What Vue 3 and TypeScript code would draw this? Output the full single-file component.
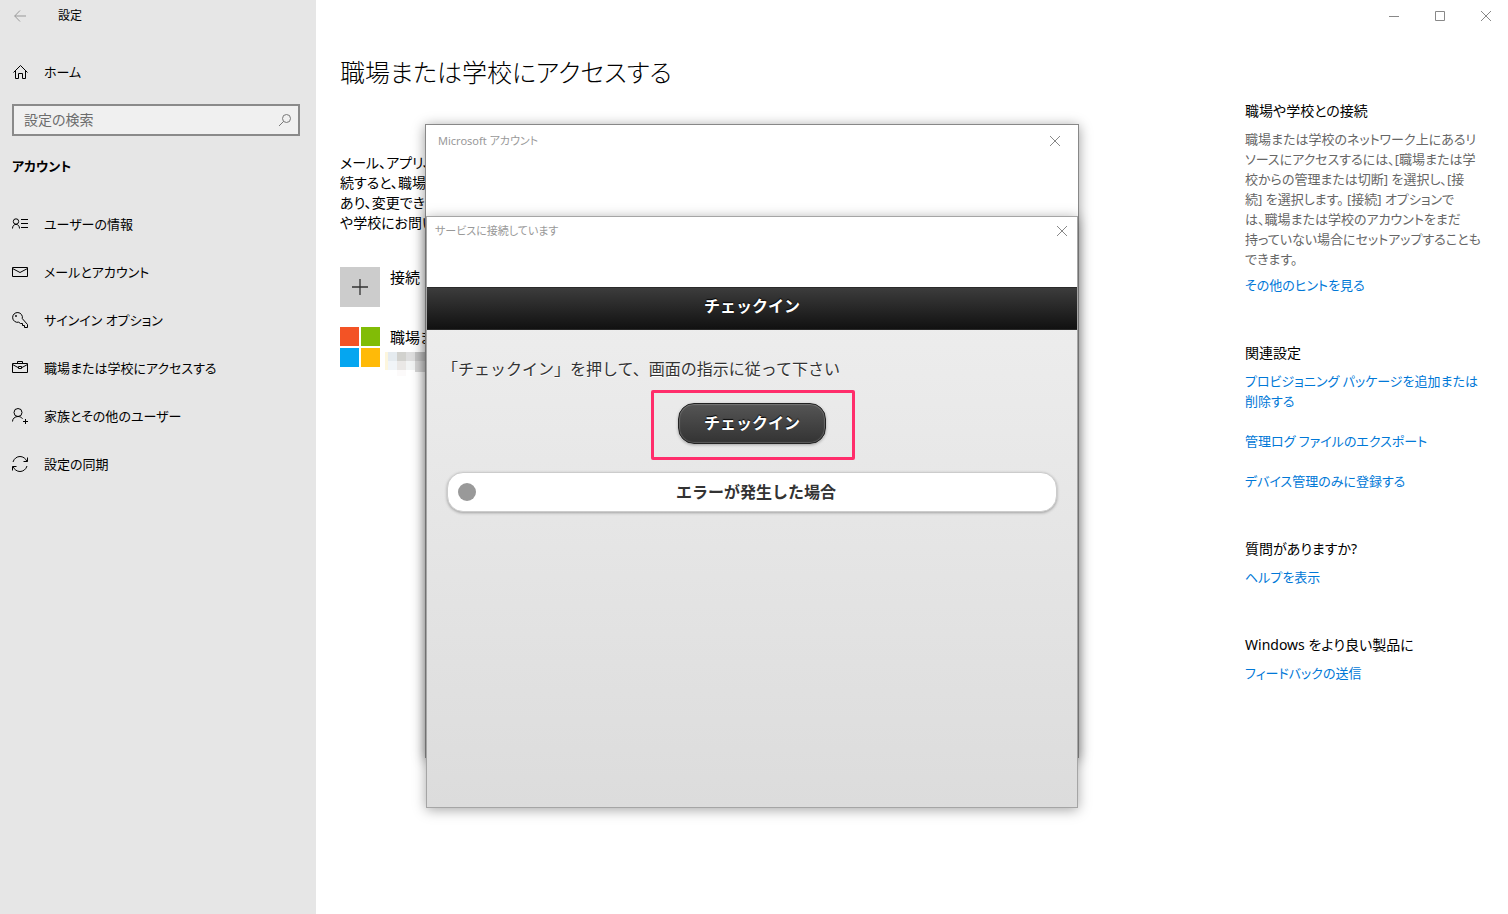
<script setup lang="ts">
interface NavItem {
  icon: string
  label: string
}

interface LinkSection {
  title: string
  links: string[][]
}

const navItems: NavItem[] = [
  { icon: 'info', label: 'ユーザーの情報' },
  { icon: 'mail', label: 'メールとアカウント' },
  { icon: 'key', label: 'サインイン オプション' },
  { icon: 'work', label: '職場または学校にアクセスする' },
  { icon: 'family', label: '家族とその他のユーザー' },
  { icon: 'sync', label: '設定の同期' },
]

const introLines: string[] = ['メール、アプリ、', '続すると、職場', 'あり、変更でき', 'や学校にお問い']

const hintLines: string[] = [
  '職場または学校のネットワーク上にあるリ',
  'ソースにアクセスするには、[職場または学',
  '校からの管理または切断] を選択し、[接',
  '続] を選択します。 [接続] オプションで',
  'は、職場または学校のアカウントをまだ',
  '持っていない場合にセットアップすることも',
  'できます。',
]

const sections: LinkSection[] = [
  {
    title: '関連設定',
    links: [
      ['プロビジョニング パッケージを追加または', '削除する'],
      ['管理ログ ファイルのエクスポート'],
      ['デバイス管理のみに登録する'],
    ],
  },
  { title: '質問がありますか?', links: [['ヘルプを表示']] },
  { title: 'Windows をより良い製品に', links: [['フィードバックの送信']] },
]
</script>

<template>
  <div class="window">
    <aside class="sidebar">
      <header class="sidebar-title">
        <button class="back" type="button" aria-label="戻る">
          <svg width="12" height="12" viewBox="0 0 12 12"><path d="M6 .5.7 6 6 11.500M.7 6H12" /></svg>
        </button>
        <span>設定</span>
      </header>

      <a class="nav-link home" href="#">
        <svg width="16" height="16" viewBox="0 0 16 16">
          <path d="M1.500 8.500 8.500 1.500 15.500 8.500M3.500 6.500V14.500H6.500V9.500H10.500V14.500H13.500V6.500" />
        </svg>
        <span>ホーム</span>
      </a>

      <div class="search">
        <input type="text" placeholder="設定の検索" aria-label="設定の検索" />
        <svg width="14" height="14" viewBox="0 0 14 14"><circle cx="8.500" cy="5.500" r="4" /><path d="M5.600 8.400 1 13" /></svg>
      </div>

      <h2>アカウント</h2>

      <nav>
        <a v-for="item in navItems" :key="item.icon" class="nav-link" href="#">
          <svg width="16" height="16" viewBox="0 0 16 16">
            <template v-if="item.icon === 'info'">
              <circle cx="4" cy="5.500" r="2.700" />
              <path d="M.5 12.500C.5 10 2 8.400 4 8.400S7.500 10 7.500 12.500M9 3.500H16M9 7.500H16M9 11.500H16" />
            </template>
            <path v-else-if="item.icon === 'mail'" d="M.5 3.500H15.500V12.500H.5ZM.5 4.500 8 8.500 15.500 4.500" />
            <template v-else-if="item.icon === 'key'">
              <path d="M10.300 6.600A4.900 4.900 0 1 0 6.700 10.200L8.500 11.500H10.500V13.500H12.500V15.500H15.500V12.500Z" />
              <circle cx="4" cy="4" r=".6" />
            </template>
            <path
              v-else-if="item.icon === 'work'"
              d="M.5 3.500H15.500V12.500H.5ZM5.500 3.500V1.500H10.500V3.500M.5 4.500 6 7.500M10 7.500 15.500 4.500M6.500 6.500H9.500V8.500H6.500Z"
            />
            <template v-else-if="item.icon === 'family'">
              <circle cx="6" cy="4.500" r="4" />
              <path d="M.5 13.500C.5 10.500 3 8.500 6 8.500 7.800 8.500 9.500 9.300 10.500 10.700M13.500 11V16M11 13.500H16" />
            </template>
            <path
              v-else
              d="M1 6C2 2.500 5 .5 8 .5 11 .5 13.800 2.500 15 5.500M15.500 1.500V5.500H11.500M15 10C14 13.500 11 15.500 8 15.500 5 15.500 2.200 13.500 1 10.500M.5 14.500V10.500H4.500"
            />
          </svg>
          <span>{{ item.label }}</span>
        </a>
      </nav>
    </aside>

    <main class="main">
      <div class="caption">
        <button type="button" aria-label="最小化">
          <svg width="46" height="32" viewBox="0 0 46 32"><path d="M19 16.500H29" /></svg>
        </button>
        <button type="button" aria-label="最大化">
          <svg width="46" height="32" viewBox="0 0 46 32"><path d="M19.500 11.500H28.500V20.500H19.500Z" /></svg>
        </button>
        <button type="button" aria-label="閉じる">
          <svg width="46" height="32" viewBox="0 0 46 32"><path d="M19 11 29 21M29 11 19 21" /></svg>
        </button>
      </div>

      <div class="columns">
        <section class="content">
          <h1>職場または学校にアクセスする</h1>
          <p class="intro">
            <span v-for="line in introLines" :key="line">{{ line }}</span>
          </p>
          <button class="account" type="button">
            <svg class="tile" width="40" height="40" viewBox="0 0 40 40">
              <rect width="40" height="40" fill="#ccc" />
              <path d="M12 20H28M20 12V28" stroke="#333" stroke-width="1.300" />
            </svg>
            <span>接続</span>
          </button>
          <button class="account" type="button">
            <svg class="tile" width="40" height="40" viewBox="0 0 40 40">
              <rect width="19" height="19" fill="#f35325" />
              <rect x="21" width="19" height="19" fill="#81bc06" />
              <rect y="21" width="19" height="19" fill="#05a6f0" />
              <rect x="21" y="21" width="19" height="19" fill="#ffba08" />
            </svg>
            <span class="account-text">
              <span>職場ま</span>
              <svg class="mosaic" width="40" height="24" viewBox="0 0 40 24">
                <rect width="3" height="18" fill="#fdf6dd" />
                <rect x="3" width="9" height="9" fill="#e5ebef" />
                <rect x="12" width="9" height="9" fill="#d2d2ce" />
                <rect x="21" width="9" height="9" fill="#dedede" />
                <rect x="30" width="10" height="9" fill="#c4c4c4" />
                <rect x="3" y="9" width="9" height="9" fill="#f1f5f8" />
                <rect x="12" y="9" width="9" height="9" fill="#eae8e6" />
                <rect x="21" y="9" width="9" height="9" fill="#f2f4f4" />
                <rect x="30" y="9" width="10" height="11" fill="#d6d6d6" />
                <rect x="12" y="18" width="9" height="6" fill="#fcfafa" />
              </svg>
            </span>
          </button>
        </section>

        <aside class="related">
          <section>
            <h3>職場や学校との接続</h3>
            <p><span v-for="line in hintLines" :key="line">{{ line }}</span></p>
            <a class="more" href="#">その他のヒントを見る</a>
          </section>
          <section v-for="section in sections" :key="section.title">
            <h3>{{ section.title }}</h3>
            <div class="links">
              <a v-for="link in section.links" :key="link[0]" href="#">
                <span v-for="part in link" :key="part">{{ part }}</span>
              </a>
            </div>
          </section>
        </aside>
      </div>
    </main>

    <div class="account-dialog" role="dialog" aria-label="Microsoft アカウント">
      <header class="dialog-title">
        <span>Microsoft アカウント</span>
        <button type="button" aria-label="閉じる">
          <svg width="46" height="32" viewBox="0 0 46 32"><path d="M18 11 28 21M28 11 18 21" /></svg>
        </button>
      </header>

      <div class="service-dialog" role="dialog" aria-label="サービスに接続しています">
        <header class="dialog-title service-title">
          <span>サービスに接続しています</span>
          <button type="button" aria-label="閉じる">
            <svg width="30" height="28" viewBox="0 0 30 28"><path d="M10 9 20 19M20 9 10 19" /></svg>
          </button>
        </header>
        <div class="page">
          <h2 class="page-header">チェックイン</h2>
          <div class="page-body">
            <p>「チェックイン」を押して、画面の指示に従って下さい</p>
            <div class="highlight">
              <button class="checkin" type="button">チェックイン</button>
            </div>
            <button class="trouble" type="button">
              <span class="dot"></span>
              <span class="trouble-label">エラーが発生した場合</span>
            </button>
          </div>
        </div>
      </div>
    </div>
  </div>
</template>

<style>
body {
  margin: 0;
}
</style>

<style scoped>
* {
  box-sizing: border-box;
}

.window {
  position: relative;
  display: flex;
  min-height: 100vh;
  overflow: hidden;
  background: #fff;
  color: #000;
  font-family: "Noto Sans", "Noto Sans CJK JP", sans-serif;
  font-feature-settings: "palt";
  font-size: 13px;
  line-height: 20px;
}

h1,
h2,
h3,
p {
  margin: 0;
  font-weight: 400;
}

button {
  margin: 0;
  padding: 0;
  border: 0;
  background: none;
  color: inherit;
  font: inherit;
  font-feature-settings: inherit;
}

a {
  color: #0078d7;
  text-decoration: none;
}

svg {
  display: block;
  flex: none;
  fill: none;
  stroke: #000;
}

.sidebar {
  flex: none;
  width: 316px;
  background: #e6e6e6;
}

.sidebar-title {
  display: flex;
  align-items: center;
  gap: 32px;
  height: 32px;
  padding-left: 14px;
  font-size: 12px;
}

.back svg {
  stroke: #999;
}

.nav-link {
  display: flex;
  align-items: center;
  gap: 16px;
  height: 48px;
  padding-left: 12px;
  color: #000;
}

.home {
  height: 40px;
  margin: 20px 0 12px;
}

.search {
  display: flex;
  align-items: center;
  height: 32px;
  margin: 0 16px 0 12px;
  padding: 0 6px 0 10px;
  border: 2px solid #8a8a8a;
  background: #f0f0f0;
}

.search input {
  flex: 1;
  min-width: 0;
  padding: 0;
  border: 0;
  outline: 0;
  background: none;
  font: inherit;
  font-feature-settings: inherit;
  font-size: 14px;
}

.search input::placeholder {
  color: #6c6c6c;
  opacity: 1;
}

.search svg {
  stroke: #777;
}

.sidebar h2 {
  margin: 20px 12px 24px;
  font-size: 13px;
  font-weight: 700;
}

.main {
  flex: 1;
  min-width: 0;
}

.caption {
  display: flex;
  justify-content: flex-end;
  height: 32px;
}

.caption svg,
.dialog-title svg {
  stroke: #888;
}

.columns {
  display: flex;
  justify-content: space-between;
  padding: 0 24px;
}

h1 {
  margin-top: 20px;
  font-size: 25px;
  font-weight: 300;
  line-height: 40px;
  white-space: nowrap;
}

.intro {
  margin: 61px 0 34px;
  font-size: 14px;
}

.intro span,
.related p span,
.links span {
  display: block;
  white-space: nowrap;
}

.account {
  display: flex;
  gap: 10px;
  height: 60px;
  font-size: 15px;
  text-align: left;
}

.account-text {
  display: flex;
  flex-direction: column;
  gap: 5px;
}

.tile,
.mosaic {
  stroke: none;
}

.mosaic {
  margin-left: -5px;
}

.related {
  display: flex;
  flex-direction: column;
  flex: none;
  gap: 48px;
  width: 239px;
  padding-top: 69px;
}

.related h3 {
  margin-bottom: 8px;
  font-size: 14px;
}

.related p {
  margin-bottom: 6px;
  color: #666;
}

.more {
  display: block;
}

.links {
  display: flex;
  flex-direction: column;
  gap: 20px;
}

.account-dialog {
  position: absolute;
  top: 124px;
  left: calc(50% - 329px);
  width: 654px;
  height: 634px;
  border: 1px solid #888;
  background: #fff;
  box-shadow: 0 2px 12px rgba(0, 0, 0, 0.4);
}

.dialog-title {
  display: flex;
  align-items: center;
  justify-content: space-between;
  height: 32px;
  padding-left: 12px;
  color: #999;
  font-size: 11px;
}

.service-dialog {
  position: absolute;
  top: 91px;
  left: 0;
  display: flex;
  flex-direction: column;
  width: 100%;
  height: 592px;
  border: 1px solid #a5a5a5;
  background: #fff;
  box-shadow: 0 2px 12px rgba(0, 0, 0, 0.35);
}

.service-title {
  height: 28px;
  padding-left: 8px;
}

.page {
  display: flex;
  flex: 1;
  flex-direction: column;
  margin-top: 42px;
  background: linear-gradient(#eee, #dcdcdc);
  color: #333;
  font-family: "Noto Sans CJK JP", sans-serif;
  font-feature-settings: normal;
  font-size: 16px;
}

.page-header {
  height: 43px;
  padding-top: 7px;
  border: 1px solid #2a2a2a;
  border-width: 1px 0;
  background: linear-gradient(#3c3c3c, #111);
  color: #fff;
  font-size: 16px;
  font-weight: 700;
  text-align: center;
  text-shadow: 0 -1px 1px #000;
}

.page-body {
  display: flex;
  flex-direction: column;
  padding: 28px 15px;
  text-shadow: 0 1px 0 #fff;
}

.highlight {
  align-self: center;
  margin: 12px 0 12px 2px;
  padding: 10px 26px 13px 24px;
  border: 3px solid #ff2d6b;
  border-radius: 2px;
}

.checkin {
  display: block;
  width: 148px;
  height: 41px;
  padding-bottom: 3px;
  border: 1px solid #222;
  border-radius: 16px;
  background: linear-gradient(#555, #333);
  box-shadow: inset 0 0 1px 1px rgba(255, 255, 255, 0.2), 0 1px 3px rgba(0, 0, 0, 0.3);
  color: #fff;
  font-weight: 700;
  text-shadow: 0 -1px 1px #000;
}

.trouble {
  display: flex;
  align-items: center;
  height: 40px;
  margin: 0 5px;
  padding: 0 10px;
  border: 1px solid #ccc;
  border-radius: 16px;
  background: #fff;
  box-shadow: 0 1px 3px rgba(0, 0, 0, 0.3);
  font-weight: 700;
}

.dot {
  width: 18px;
  height: 18px;
  border-radius: 50%;
  background: #999;
}

.trouble-label {
  flex: 1;
  padding: 0 10px 3px 0;
  text-align: center;
}
</style>
